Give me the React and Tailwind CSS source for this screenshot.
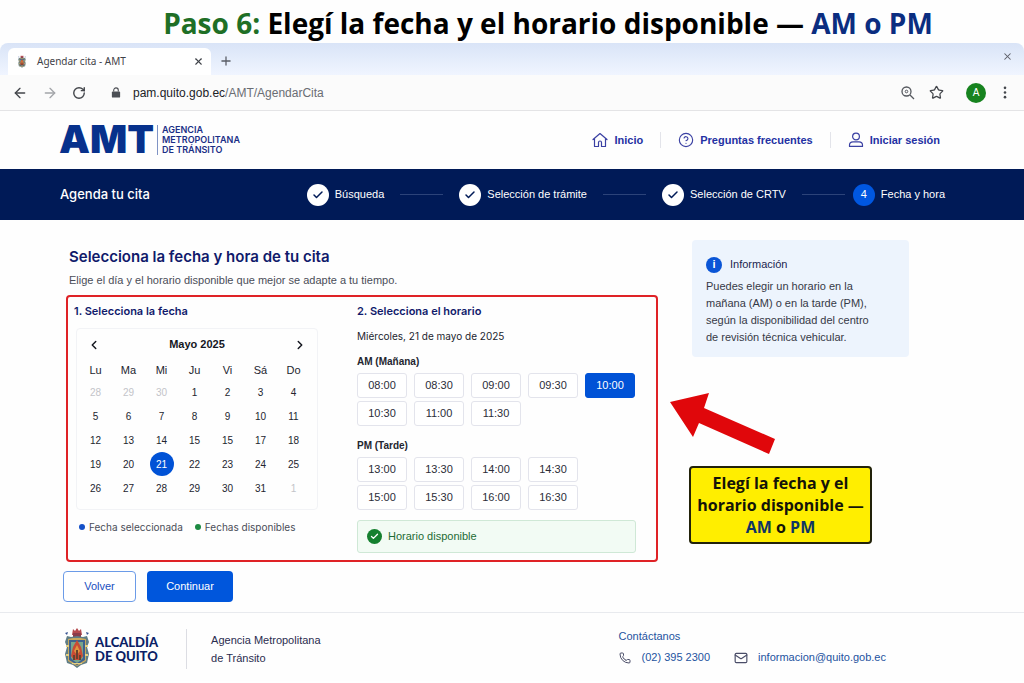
import React, { useState } from "react";
import {
  ArrowLeft,
  ArrowRight,
  Check,
  ChevronLeft,
  ChevronRight,
  CircleQuestionMark,
  Mail,
  Phone,
  Plus,
  RotateCw,
  Star,
  X,
} from "lucide-react";

const days = ["Lu", "Ma", "Mi", "Ju", "Vi", "Sá", "Do"];

const weeks = [
  [28, 29, 30, 1, 2, 3, 4],
  [5, 6, 7, 8, 9, 10, 11],
  [12, 13, 14, 15, 15, 17, 18],
  [19, 20, 21, 22, 23, 24, 25],
  [26, 27, 28, 29, 30, 31, 1],
];

const morning = ["08:00", "08:30", "09:00", "09:30", "10:00", "10:30", "11:00", "11:30"];
const afternoon = ["13:00", "13:30", "14:00", "14:30", "15:00", "15:30", "16:00", "16:30"];

const steps = [
  { label: "Búsqueda", done: true },
  { label: "Selección de trámite", done: true },
  { label: "Selección de CRTV", done: true },
  { label: "Fecha y hora", done: false },
];

function Crest({ className }) {
  return (
    <svg viewBox="0 0 26 42" className={className} aria-hidden="true">
      <path d="M9 2l2 2 2-3 2 3 2-2 1 6H8z" fill="#b5494d" />
      <path d="M9 6h8v4H9z" fill="#8a3d4b" />
      <path d="M1 6l3-1-1 3zM25 6l-3-1 1 3z" fill="#34508f" />
      <path d="M3 9l4 1 6-1 6 1 4-1 2 6-2 5 2 7-2 9-6 2-4 3-4-3-6-2-2-9 2-7-2-5z" fill="#5f7d86" />
      <path d="M4 12l5-1h8l5 1v22l-5 3-4 2-4-2-5-3z" fill="#c9a95c" />
      <path d="M5 13h16v20l-5 3-3 2-3-2-5-3z" fill="#3d6290" />
      <path d="M7 15h12v16l-3 3-3 2-3-2-3-3z" fill="#79a58c" />
      <path d="M13 13l4 7 2 9-3 4h-6l-3-4 2-9z" fill="#c94b35" />
      <path d="M13 18l3 6-3 4-3-4z" fill="#e0953f" />
      <path d="M12 23h2v9h-2zM9 28h2v5H9zM15 28h2v5h-2z" fill="#68422f" />
      <path d="M2 18h3v2H2zM21 18h3v2h-3zM2 27h3v2H2zM21 27h3v2h-3zM8 36h10v1H8z" fill="#e4cf84" />
    </svg>
  );
}

function HomeIcon() {
  return (
    <svg viewBox="0 0 16 16" className="size-4" fill="none" stroke="#3b41a3" strokeWidth="1.2" strokeLinejoin="round" aria-hidden="true">
      <path d="M1 7.500l7-6 7 6M2.500 6.500v8h4V10.500a1.500 1.500 0 0 1 3 0v4h4v-8" strokeLinecap="round" />
    </svg>
  );
}

function UserIcon() {
  return (
    <svg viewBox="0 0 16 16" className="size-4" fill="none" stroke="#3b41a3" strokeWidth="1.2" aria-hidden="true">
      <circle cx="8" cy="4.500" r="3.400" />
      <path d="M1.500 14.400v-1.300c0-2 1.500-3.200 3.500-3.200h6c2 0 3.500 1.200 3.500 3.200v1.300z" strokeLinejoin="round" />
    </svg>
  );
}

function Slots({ times, selected, onSelect, className }) {
  return (
    <div className={`grid w-max gap-x-[7px] gap-y-[3px] ${className}`}>
      {times.map((t) => (
        <button
          key={t}
          type="button"
          aria-pressed={t === selected}
          onClick={() => onSelect(t)}
          className={
            t === selected
              ? "h-[25px] w-[50px] rounded-[3px] border border-[#0052d6] bg-[#0052d6] text-[11px] text-white"
              : "h-[25px] w-[50px] rounded-[3px] border border-[#e3e4ec] bg-white text-[11px] text-[#2b2d38]"
          }
        >
          {t}
        </button>
      ))}
    </div>
  );
}

function BrowserBar() {
  return (
    <div>
      <div className="flex h-8 items-end rounded-t-lg bg-gradient-to-b from-[#d9e4f7] to-[#f0f5ff] pl-2">
        <div className="flex h-[27px] w-[203px] items-center rounded-t-md bg-white pl-2 pr-[7px]">
          <Crest className="h-[13px] w-3" />
          <span className="ml-[9px] flex-1 font-['Noto_Sans',sans-serif] text-[10px] text-[#3f4248]">Agendar cita - AMT</span>
          <button type="button" aria-label="Cerrar pestaña">
            <X className="size-[11px] text-[#3f4248]" strokeWidth={2.4} />
          </button>
        </div>
        <button type="button" aria-label="Nueva pestaña" className="mb-[7px] ml-2">
          <Plus className="size-[14px] text-[#5a5d66]" strokeWidth={2.2} />
        </button>
        <button type="button" aria-label="Cerrar" className="mb-[13px] ml-auto mr-[11px]">
          <X className="size-[11px] text-[#5a5d66]" strokeWidth={2.2} />
        </button>
      </div>
      <div className="flex h-9 items-center border-b border-[#e4e4e6] bg-[#fbfbfb] pl-3 pr-3">
        <button type="button" aria-label="Atrás">
          <ArrowLeft className="size-4 text-[#43464b]" />
        </button>
        <button type="button" aria-label="Adelante" className="ml-[14px]">
          <ArrowRight className="size-4 text-[#a3a5a9]" />
        </button>
        <button type="button" aria-label="Recargar" className="ml-[14px]">
          <RotateCw className="size-[14px] text-[#43464b]" strokeWidth={2.4} />
        </button>
        <svg viewBox="0 0 10 12" className="ml-[25px] h-[11px] w-[10px]" aria-hidden="true">
          <path d="M2.500 5V3.500a2.500 2.500 0 0 1 5 0V5" fill="none" stroke="#4c4f55" strokeWidth="1.200" />
          <rect x="0.500" y="5" width="9" height="6.500" rx="1" fill="#4c4f55" />
        </svg>
        <span className="ml-3 flex-1 text-[12px] text-[#202226]">
          pam.quito.gob.ec<span className="text-[#6a6d73]">/AMT/AgendarCita</span>
        </span>
        <svg viewBox="0 0 14 14" className="size-[14px]" fill="none" stroke="#55585e" strokeWidth="1.300" aria-hidden="true">
          <circle cx="5.500" cy="5.500" r="4.500" />
          <circle cx="5.500" cy="5.500" r="1.300" strokeWidth="1" />
          <path d="M9 9l4 4" />
        </svg>
        <Star className="ml-[14px] size-[15px] text-[#43464b]" />
        <span className="ml-[22px] flex size-5 items-center justify-center rounded-full bg-[#17831f] text-[10px] text-white">A</span>
        <svg viewBox="0 0 4 14" className="ml-[17px] mr-[5px] h-[13px] w-1" fill="#43464b" aria-hidden="true">
          <circle cx="2" cy="2" r="1.400" />
          <circle cx="2" cy="7" r="1.400" />
          <circle cx="2" cy="12" r="1.400" />
        </svg>
      </div>
    </div>
  );
}

export default function App() {
  const [slot, setSlot] = useState("10:00");

  return (
    <div className="bg-[#fefefe] font-['Liberation_Sans',sans-serif] text-[#23252f]">
      <h1 className="flex h-[43px] items-center justify-center whitespace-pre pl-[72px] pt-[2px] font-['Open_Sans',sans-serif] text-[28px] font-bold text-black">
        <span className="text-[#1f6f26]">Paso 6:</span> Elegí la fecha y el horario disponible — <span className="text-[#0b2d80]">AM o PM</span>
      </h1>

      <BrowserBar />

      <header className="flex h-[58px] items-center pl-[59px] pr-[84px]">
        <div className="flex items-center font-['Inter',sans-serif] text-[#07318c]">
          <span className="pb-[3px] text-[39px] font-black leading-none">AMT</span>
          <span className="ml-[3px] border-l border-[#7f93c4] pl-1 text-[9px] font-semibold leading-[10px] text-[#1b2f86]">
            AGENCIA
            <br />
            METROPOLITANA
            <br />
            DE TRÁNSITO
          </span>
        </div>
        <nav className="ml-auto flex items-center text-[11px] font-bold text-[#2431a3]">
          <a href="#inicio" className="flex items-center gap-[6px]">
            <HomeIcon />
            Inicio
          </a>
          <span className="mx-[17px] h-4 w-px bg-[#e3e4ea]" />
          <a href="#preguntas" className="flex items-center gap-[6px]">
            <CircleQuestionMark className="size-4 text-[#3b41a3]" strokeWidth={1.7} />
            Preguntas frecuentes
          </a>
          <span className="mx-[17px] h-4 w-px bg-[#e3e4ea]" />
          <a href="#sesion" className="flex items-center gap-[6px]">
            <UserIcon />
            Iniciar sesión
          </a>
        </nav>
      </header>

      <div className="flex h-[51px] items-center bg-[#001a57] pl-[60px] pr-[79px] text-white">
        <h2 className="font-['Inter',sans-serif] text-[13px] font-medium">Agenda tu cita</h2>
        <ol className="ml-auto flex items-center gap-4">
          {steps.map((s, i) => (
            <li key={s.label} className="flex items-center text-[11px]">
              {i > 0 && <span className={s.done ? "mr-4 h-px w-[43px] bg-[#2c4379]" : "mr-2 h-px w-[43px] bg-[#2c4379]"} />}
              {s.done ? (
                <span className="flex size-[22px] items-center justify-center rounded-full bg-white">
                  <Check className="size-3 text-[#001a57]" strokeWidth={3} />
                </span>
              ) : (
                <span className="flex size-[22px] items-center justify-center rounded-full bg-[#0057e0]">{i + 1}</span>
              )}
              <span className="ml-[6px]">{s.label}</span>
            </li>
          ))}
        </ol>
      </div>

      <main className="flex gap-[11px] pb-[10px] pl-[66px] pr-[115px] pt-5">
        <div className="min-w-0 flex-1 pt-[7px]">
          <h2 className="pl-[3px] font-['Inter',sans-serif] text-[15px] font-semibold leading-5 text-[#101a6b]">
            Selecciona la fecha y hora de tu cita
          </h2>
          <p className="mt-[3px] pl-[3px] text-[11px] leading-5 text-[#4a4d58]">
            Elige el día y el horario disponible que mejor se adapte a tu tiempo.
          </p>

          <div className="mt-[5px] flex h-[267px] rounded border-2 border-[#df2226] pl-[6px] pt-[6px]">
            <section className="w-[283px] shrink-0">
              <h3 className="font-['Inter',sans-serif] text-[11px] font-semibold leading-4 text-[#101a6b]">1. Selecciona la fecha</h3>
              <div className="mt-[9px] ml-[2px] w-[242px] rounded-sm border border-[#f2f3f6] px-[2px] pb-[9px]">
                <div className="flex h-[31px] items-center justify-between px-2">
                  <button type="button" aria-label="Mes anterior">
                    <ChevronLeft className="size-[14px] text-[#15171f]" strokeWidth={2.5} />
                  </button>
                  <span className="text-[11px] font-bold text-[#15171f]">Mayo 2025</span>
                  <button type="button" aria-label="Mes siguiente">
                    <ChevronRight className="size-[14px] text-[#15171f]" strokeWidth={2.5} />
                  </button>
                </div>
                <table className="w-[231px] table-fixed text-center text-[10px]">
                  <thead>
                    <tr className="h-5 text-[11px]">
                      {days.map((d) => (
                        <th key={d} scope="col" className="p-0 font-normal">
                          {d}
                        </th>
                      ))}
                    </tr>
                  </thead>
                  <tbody>
                    {weeks.map((week, w) => (
                      <tr key={w}>
                        {week.map((d, i) => {
                          const outside = (w === 0 && d > 7) || (w === 4 && d < 7);
                          return (
                            <td key={i} className="h-6 p-0">
                              <button
                                type="button"
                                className={
                                  d === 21
                                    ? "mx-auto block size-6 rounded-full bg-[#0052d6] text-white"
                                    : outside
                                      ? "mx-auto block size-6 text-[#c3c4c9]"
                                      : "mx-auto block size-6"
                                }
                              >
                                {d}
                              </button>
                            </td>
                          );
                        })}
                      </tr>
                    ))}
                  </tbody>
                </table>
              </div>
              <div className="mt-[9px] flex items-center gap-3 pl-[5px] font-['Inter',sans-serif] text-[10px] leading-4 text-[#4a4d58]">
                <span className="flex items-center gap-1">
                  <i className="size-[6px] rounded-full bg-[#1450c8]" />
                  Fecha seleccionada
                </span>
                <span className="flex items-center gap-1">
                  <i className="size-[6px] rounded-full bg-[#1d8a42]" />
                  Fechas disponibles
                </span>
              </div>
            </section>

            <section>
              <h3 className="font-['Inter',sans-serif] text-[11px] font-semibold leading-4 text-[#101a6b]">2. Selecciona el horario</h3>
              <p className="mt-[9px] font-['Inter',sans-serif] text-[10px] leading-4">Miércoles, 21 de mayo de 2025</p>
              <h4 className="mb-[3px] mt-[10px] text-[10px] font-bold leading-4">AM (Mañana)</h4>
              <Slots times={morning} selected={slot} onSelect={setSlot} className="grid-cols-5" />
              <h4 className="mb-[3px] mt-3 text-[10px] font-bold leading-4">PM (Tarde)</h4>
              <Slots times={afternoon} selected={slot} onSelect={setSlot} className="grid-cols-4" />
              <div className="mt-[10px] flex h-[33px] w-[279px] items-center gap-[6px] rounded-[3px] border border-[#cfe8d6] bg-[#f2fbf4] pl-[9px] text-[11px] text-[#1e6b35]">
                <span className="flex size-[15px] items-center justify-center rounded-full bg-[#15802f]">
                  <Check className="size-[9px] text-white" strokeWidth={3.5} />
                </span>
                Horario disponible
              </div>
            </section>
          </div>

          <div className="-ml-[3px] mt-[9px] flex gap-[11px] text-[11px]">
            <button type="button" className="h-[31px] w-[73px] rounded border border-[#6b9be8] bg-white text-[#1b4fc0]">
              Volver
            </button>
            <button type="button" className="h-[31px] w-[86px] rounded bg-[#0056dc] text-white">
              Continuar
            </button>
          </div>
        </div>

        <aside className="w-[240px] shrink-0">
          <div className="ml-[23px] h-[117px] rounded-sm bg-[#edf4fd] pl-[14px] pt-4 text-[11px]">
            <h3 className="flex items-center gap-2 leading-[17px] text-[#1b1f4f]">
              <span className="flex size-4 items-center justify-center rounded-full bg-[#0a55d6] text-[11px] font-bold text-white">i</span>
              Información
            </h3>
            <p className="mt-[5px] leading-[17px] text-[#363946]">
              Puedes elegir un horario en la
              <br />
              mañana (AM) o en la tarde (PM),
              <br />
              según la disponibilidad del centro
              <br />
              de revisión técnica vehicular.
            </p>
          </div>
          <svg viewBox="0 0 106 62" className="mt-9 h-[62px] w-[106px]" aria-hidden="true">
            <path d="M1 9L40 0l-5 15 71 31-6 15-70-31-6 14z" fill="#e0070b" />
          </svg>
          <p className="ml-5 mt-[11px] w-[183px] whitespace-nowrap rounded border-2 border-[#22220a] bg-[#ffee00] py-1 text-center font-['Open_Sans',sans-serif] text-[16px] font-bold leading-[22px] text-[#141408]">
            Elegí la fecha y el
            <br />
            horario disponible —
            <br />
            <span className="text-[#0f3564]">AM</span> o <span className="text-[#0f3564]">PM</span>
          </p>
        </aside>
      </main>

      <footer className="flex items-start border-t border-[#e8eaee] pb-3 pl-[63px] pr-[138px] pt-[14px]">
        <Crest className="h-[42px] w-[28px]" />
        <span className="ml-1 mt-2 font-['Lato',sans-serif] text-[13px] font-black leading-[14px] text-[#0b1f66]">
          ALCALDÍA
          <br />
          DE QUITO
        </span>
        <p className="ml-[28px] mt-[2px] border-l border-[#dcdde3] py-[2px] pl-6 text-[11px] leading-[18px] text-[#2a2c4f]">
          Agencia Metropolitana
          <br />
          de Tránsito
        </p>
        <address className="ml-auto text-[11px] not-italic text-[#24539f]">
          <p className="leading-[18px]">Contáctanos</p>
          <div className="mt-1 flex items-center leading-[17px]">
            <Phone className="size-3 text-[#4a4d68]" />
            <a href="tel:023952300" className="ml-[11px]">
              (02) 395 2300
            </a>
            <Mail className="ml-6 size-[14px] text-[#4a4d68]" />
            <a href="mailto:informacion@quito.gob.ec" className="ml-[10px]">
              informacion@quito.gob.ec
            </a>
          </div>
        </address>
      </footer>
    </div>
  );
}
